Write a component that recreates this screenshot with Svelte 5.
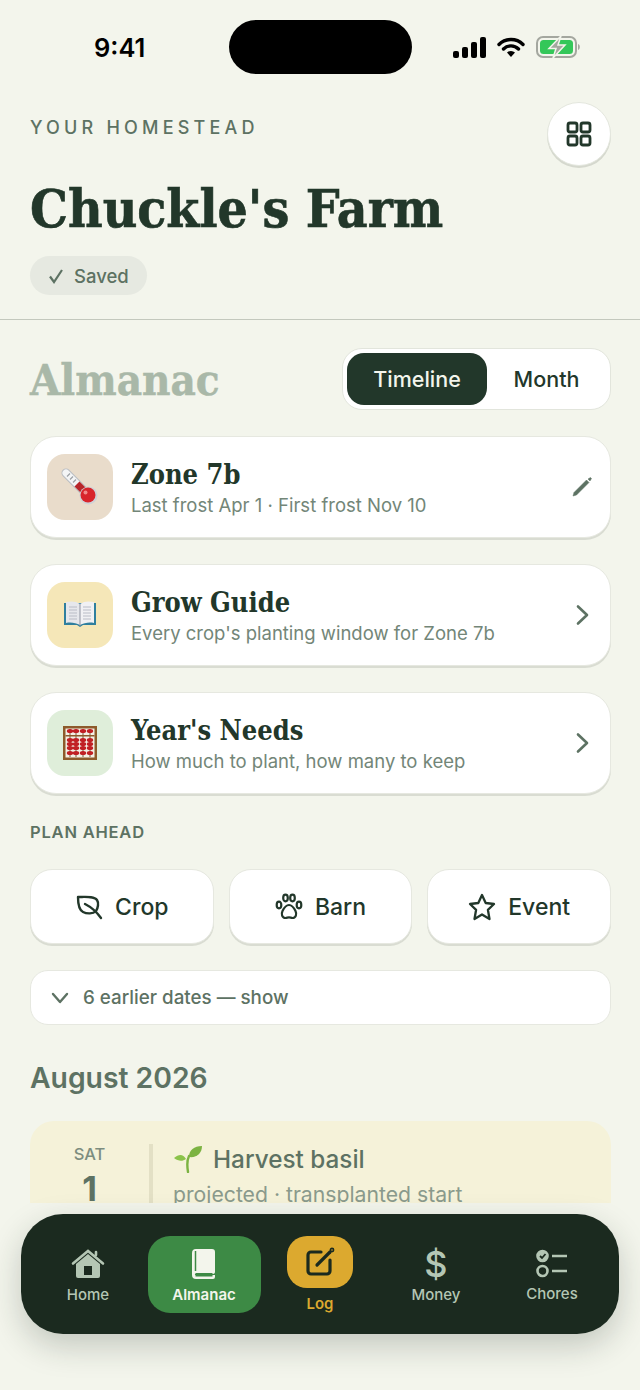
<script>
  let view = $state('Timeline');
  const views = ['Timeline', 'Month'];
</script>

<div class="screen">
  <div class="scroll">
    <div class="status">
      <span class="time">9:41</span>
      <span class="island"></span>
      <span class="status-icons">
        <svg width="33" height="21" viewBox="0 0 33 21"><rect x="0" y="14" width="6" height="7" rx="2"/><rect x="9" y="10" width="6" height="11" rx="2"/><rect x="18" y="5" width="6" height="16" rx="2"/><rect x="27" y="0" width="6" height="21" rx="2"/></svg>
        <svg width="28" height="21" viewBox="0 0 28 21"><path d="M2 7.500a17 17 0 0 1 24 0M6.500 12a10.500 10.500 0 0 1 15 0" fill="none" stroke="#000" stroke-width="3.400" stroke-linecap="round"/><path d="M10 15.600a5.600 5.600 0 0 1 8 0L14 20z"/></svg>
        <svg width="46" height="22" viewBox="0 0 46 22"><rect x="1" y="1" width="39" height="20" rx="6" fill="none" stroke="#a4a79f" stroke-width="2"/><rect x="4" y="4" width="33" height="14" rx="3.500" fill="#34c759"/><path d="M42 8c2.400.5 2.400 5.500 0 6z" fill="#a4a79f"/><path d="M25 0 13 12.500h7L17 22l12-13h-7z" fill="#a4a79f" stroke="#f3f5ec" stroke-width="1.500"/></svg>
      </span>
    </div>

    <header class="head">
      <div class="head-top">
        <div class="eyebrow">YOUR HOMESTEAD</div>
        <button class="round" aria-label="Menu">
          <svg width="26" height="26" viewBox="0 0 26 26" fill="none" stroke="#22372a" stroke-width="2.800"><rect x="2" y="2" width="9" height="9" rx="2"/><rect x="15" y="2" width="9" height="9" rx="2"/><rect x="2" y="15" width="9" height="9" rx="2"/><rect x="15" y="15" width="9" height="9" rx="2"/></svg>
        </button>
      </div>
      <h1>Chuckle's Farm</h1>
      <div class="saved">
        <svg width="16" height="16" viewBox="0 0 16 16" fill="none" stroke="#5d7263" stroke-width="2.200"><path d="M2 8.500 6 14 14 2"/></svg>
        Saved
      </div>
    </header>

    <main>
      <div class="almanac-row">
        <h2>Almanac</h2>
        <div class="segment">
          {#each views as v}
            <button class:on={view === v} onclick={() => (view = v)}>{v}</button>
          {/each}
        </div>
      </div>

      <div class="card">
        <div class="tile tan">
          <svg width="40" height="40" viewBox="0 0 40 40"><path d="M6 6 27 27" stroke="#b9bdc2" stroke-width="9" stroke-linecap="round"/><path d="M6 6 27 27" stroke="#f4f5f6" stroke-width="7" stroke-linecap="round"/><path d="M17 17 27 27" stroke="#b8262a" stroke-width="7"/><circle cx="28.500" cy="28.500" r="9" fill="#cfd2d6"/><circle cx="28" cy="28" r="7.500" fill="#d8252c"/><circle cx="25.500" cy="25.500" r="2" fill="#f08a8a"/><path d="M7 9.500 10 6.500M10 12.500 13 9.500M13 15.500 16 12.500" stroke="#9da1a6" stroke-width="1.200"/></svg>
        </div>
        <div class="card-text">
          <div class="card-title">Zone 7b</div>
          <div class="card-sub">Last frost Apr 1 · First frost Nov 10</div>
        </div>
        <svg class="card-end" width="22" height="22" viewBox="0 0 22 22" fill="#5d7263" stroke="#5d7263" stroke-width=".5" stroke-linejoin="round"><path d="M2 20l1-3.500L15.500 4l2.500 2.500L5.500 19z"/><path d="M17 3l2.500-1.500 1 1L19 5z"/></svg>
      </div>

      <div class="card">
        <div class="tile yellow">
          <svg width="34" height="30" viewBox="0 0 34 30"><path d="M1 3h32v22H20l-3 2-3-2H1z" fill="#2f7f9e"/><path d="M3 2c5-1 10-1 14 2v21c-4-2-9-3-14-2z" fill="#e6e7ec"/><path d="M31 2c-5-1-10-1-14 2v21c4-2 9-3 14-2z" fill="#f1f1f4"/><path d="M6 7h8M6 10h8M6 13h8M6 16h8M6 19h8M20 7h8M20 10h8M20 13h8M20 16h8M20 19h8" stroke="#b9bcc6" stroke-width="1"/><path d="M17 4v22" stroke="#8f93a0" stroke-width="1"/></svg>
        </div>
        <div class="card-text">
          <div class="card-title">Grow Guide</div>
          <div class="card-sub">Every crop's planting window for Zone 7b</div>
        </div>
        <svg class="card-end" width="22" height="22" viewBox="0 0 22 22" fill="none" stroke="#5d7263" stroke-width="2.600" stroke-linecap="round" stroke-linejoin="round"><path d="M7 2.500 16 11l-9 8.500"/></svg>
      </div>

      <div class="card">
        <div class="tile green">
          <svg width="34" height="34" viewBox="0 0 34 34"><rect width="34" height="34" fill="#8d5a2b"/><rect x="2.500" y="2.500" width="29" height="29" fill="#f4efe6"/>
            {#each [7, 13, 20, 27] as x}
              <path d="M{x} 3v28" stroke="#7a5a3a" stroke-width="1"/>
              {#each [5, 14, 18, 22, 27] as y}<ellipse cx={x} cy={y} rx="3.200" ry="2.100" fill="#c11f24"/>{/each}
            {/each}
            <rect x="2.500" y="9" width="29" height="1.500" fill="#8d5a2b"/></svg>
        </div>
        <div class="card-text">
          <div class="card-title">Year's Needs</div>
          <div class="card-sub">How much to plant, how many to keep</div>
        </div>
        <svg class="card-end" width="22" height="22" viewBox="0 0 22 22" fill="none" stroke="#5d7263" stroke-width="2.600" stroke-linecap="round" stroke-linejoin="round"><path d="M7 2.500 16 11l-9 8.500"/></svg>
      </div>

      <div class="section-label">PLAN AHEAD</div>

      <div class="plan">
        <button class="plan-btn">
          <svg width="28" height="26" viewBox="0 0 28 26" fill="none" stroke="#22372a" stroke-width="2.400" stroke-linecap="round" stroke-linejoin="round"><path d="M3 3c8 0 16-1 19 3 2 3 1 8-1 11-3 3-9 3-13 1C4 16 3 9 3 3z"/><path d="M10 10c4 2 11 7 16 14"/></svg>
          Crop
        </button>
        <button class="plan-btn">
          <svg width="28" height="28" viewBox="0 0 28 28" fill="none" stroke="#22372a" stroke-width="2.200" stroke-linecap="round" stroke-linejoin="round"><ellipse cx="10.500" cy="5" rx="2.300" ry="3.300"/><ellipse cx="17.500" cy="5" rx="2.300" ry="3.300"/><ellipse cx="4" cy="12" rx="2.300" ry="3.300"/><ellipse cx="24" cy="12" rx="2.300" ry="3.300"/><path d="M14 12c-3 0-5 3-6.500 6-1.500 3-.5 7 3 7 1.500 0 2-.7 3.500-.7s2 .7 3.500.7c3.500 0 4.500-4 3-7-1.500-3-3.500-6-6.500-6z"/></svg>
          Barn
        </button>
        <button class="plan-btn">
          <svg width="28" height="28" viewBox="0 0 28 28" fill="none" stroke="#22372a" stroke-width="2.300" stroke-linejoin="round"><path d="M14 2l3.700 8 8.300 1-6.100 5.800L21.500 26 14 21.500 6.500 26l1.600-9.200L2 11l8.300-1z"/></svg>
          Event
        </button>
      </div>

      <button class="earlier">
        <svg width="18" height="12" viewBox="0 0 18 12" fill="none" stroke="#5d7263" stroke-width="2.400" stroke-linecap="round" stroke-linejoin="round"><path d="M2 2l7 8 7-8"/></svg>
        6 earlier dates — show
      </button>

      <h3>August 2026</h3>

      <div class="event">
        <div class="date">
          <div class="dow">SAT</div>
          <div class="day">1</div>
        </div>
        <div class="event-body">
          <div class="event-title">
            <svg width="30" height="28" viewBox="0 0 30 28"><path d="M15 27c-1-6-1-12 1-16" fill="none" stroke="#7cb342" stroke-width="2.400" stroke-linecap="round"/><path d="M16 12C16 5 21 1 29 1c0 7-5 12-13 11z" fill="#7cb342"/><path d="M13 14C10 9 6 9 1 13c4 3 8 4 12 1z" fill="#8bc34a"/></svg>
            Harvest basil
          </div>
          <div class="event-sub">projected · transplanted start</div>
        </div>
      </div>
    </main>
  </div>

  <nav class="tabbar">
    <button class="tab">
      <svg width="34" height="30" viewBox="0 0 34 30"><path d="M5 15 17 5l12 10v12a2 2 0 0 1-2 2H7a2 2 0 0 1-2-2z" fill="#b4c6b4"/><path d="M2 14.500 17 2l15 12.500M25 6V3" fill="none" stroke="#b4c6b4" stroke-width="2.600" stroke-linecap="round"/><rect x="13" y="17" width="8" height="9" fill="#1b2a1f"/></svg>
      <span>Home</span>
    </button>
    <button class="tab active">
      <svg width="24" height="30" viewBox="0 0 24 30"><path d="M4 0h16a3 3 0 0 1 3 3v20c0 1-1 2-2 2H3a3 3 0 0 0 0 1v0H23v2a2 2 0 0 1-2 2H4a4 4 0 0 1-4-4V4a4 4 0 0 1 4-4z" fill="#f3f5ec"/><path d="M3.500 2v20" stroke="#3d8a45" stroke-width="1.500"/><rect x="3.500" y="24" width="17" height="3.500" fill="#3d8a45"/></svg>
      <span>Almanac</span>
    </button>
    <button class="tab log">
      <span class="log-tile">
        <svg width="30" height="30" viewBox="0 0 30 30" fill="none" stroke="#1b2a1f" stroke-width="3.200" stroke-linecap="round"><path d="M16 5H6a3 3 0 0 0-3 3v16a3 3 0 0 0 3 3h16a3 3 0 0 0 3-3V13"/><path d="M12 18 25 5"/><circle cx="27" cy="3" r=".8"/></svg>
      </span>
      <span>Log</span>
    </button>
    <button class="tab">
      <span class="dollar">$</span>
      <span>Money</span>
    </button>
    <button class="tab chores">
      <svg width="32" height="29" viewBox="0 0 32 29" fill="none" stroke="#b4c6b4" stroke-width="2.600"><circle cx="6.500" cy="7" r="5" fill="#b4c6b4"/><path d="M4 7l2 2 3.500-4" stroke="#1b2a1f" stroke-width="1.800"/><circle cx="6.500" cy="22" r="5"/><path d="M16 7h15M16 22h15"/></svg>
      <span>Chores</span>
    </button>
  </nav>
</div>

<style>
  :global(body) {
    margin: 0;
    background: #f3f5ec;
  }
  .screen {
    position: relative;
    width: 640px;
    height: 1390px;
    overflow: hidden;
    background: #f3f5ec;
    font-family: Inter, "Liberation Sans", sans-serif;
    color: #22372a;
  }
  button {
    font-family: inherit;
    cursor: pointer;
  }
  .scroll {
    height: 1203px;
    overflow: hidden;
  }
  .status {
    display: flex;
    align-items: center;
    height: 54px;
    padding: 20px 0 0 94px;
  }
  .time {
    font-size: 25.500px;
    font-weight: 600;
    color: #000;
    width: 135px;
  }
  .island {
    width: 183px;
    height: 54px;
    border-radius: 27px;
    background: #000;
  }
  .status-icons {
    display: flex;
    align-items: center;
    gap: 11px;
    margin-left: 41px;
    flex: none;
  }
  .head {
    padding: 28px 29px 24px 30px;
    border-bottom: 1px solid #c3c8bd;
  }
  .head-top {
    display: flex;
    justify-content: space-between;
    align-items: flex-start;
    height: 64px;
  }
  .eyebrow {
    margin-top: 15px;
    font-size: 18px;
    font-weight: 500;
    letter-spacing: 4.200px;
    color: #5d7263;
  }
  .round {
    width: 64px;
    height: 64px;
    padding: 0;
    display: flex;
    align-items: center;
    justify-content: center;
    border-radius: 50%;
    border: 1px solid #e4e7de;
    background: #fff;
    box-shadow: 0 2px 0 #d5d8ce;
  }
  h1 {
    margin: 8px 0 0;
    font-family: "DejaVu Serif", "Liberation Serif", serif;
    font-stretch: condensed;
    font-size: 53px;
    line-height: 68px;
    font-weight: 700;
    -webkit-text-stroke: 0.6px #22372a;
    color: #22372a;
  }
  .saved {
    display: inline-flex;
    align-items: center;
    gap: 10px;
    margin-top: 14px;
    height: 39px;
    padding: 0 18px;
    border-radius: 20px;
    background: #e6e9e1;
    font-size: 18.500px;
    font-weight: 500;
    color: #5d7263;
  }
  main {
    padding: 28px 29px 0 30px;
  }
  .almanac-row {
    display: flex;
    justify-content: space-between;
    align-items: center;
    margin-bottom: 26px;
  }
  h2 {
    margin: 0;
    font-family: "DejaVu Serif", "Liberation Serif", serif;
    font-stretch: condensed;
    font-size: 43.500px;
    font-weight: 700;
    -webkit-text-stroke: 0.5px #a9b8a8;
    color: #a9b8a8;
  }
  .segment {
    display: flex;
    height: 62px;
    box-sizing: border-box;
    padding: 4px;
    background: #fff;
    border: 1px solid #e2e5dc;
    border-radius: 20px;
  }
  .segment button {
    width: 119px;
    border: 0;
    border-radius: 17px;
    background: transparent;
    font-size: 21.500px;
    font-weight: 500;
    color: #22372a;
  }
  .segment button.on {
    width: 140px;
    background: #22372a;
    color: #f3f5ec;
  }
  .card {
    display: flex;
    align-items: center;
    gap: 18px;
    box-sizing: border-box;
    height: 102px;
    margin-bottom: 26px;
    padding: 0 17px 0 16px;
    background: #fff;
    border: 1px solid #e6e8e0;
    border-radius: 26px;
    box-shadow: 0 2px 0 #d9dcd2;
  }
  .tile {
    flex: none;
    width: 66px;
    height: 66px;
    display: flex;
    align-items: center;
    justify-content: center;
    border-radius: 18px;
  }
  .tan { background: #e9dccb; }
  .yellow { background: #f5e7b8; }
  .green { background: #dfeeda; }
  .card-text {
    flex: 1;
  }
  .card-title {
    font-family: "DejaVu Serif", "Liberation Serif", serif;
    font-stretch: condensed;
    font-size: 27px;
    line-height: 34px;
    font-weight: 700;
    color: #22372a;
    padding-top: 1px;
  }
  .card-sub {
    margin-top: 1px;
    font-size: 18.500px;
    line-height: 24px;
    color: #738678;
  }
  .card-end {
    flex: none;
  }
  .section-label {
    margin-top: 2px;
    font-size: 16.500px;
    line-height: 24px;
    font-weight: 600;
    letter-spacing: 0.800px;
    color: #5d7263;
  }
  .plan {
    display: grid;
    grid-template-columns: repeat(3, 1fr);
    gap: 15px;
    margin-top: 25px;
  }
  .plan-btn {
    display: flex;
    align-items: center;
    justify-content: center;
    gap: 12px;
    height: 75px;
    padding: 0;
    background: #fff;
    border: 1px solid #e6e8e0;
    border-radius: 22px;
    box-shadow: 0 2px 0 #d9dcd2;
    font-size: 23px;
    font-weight: 500;
    color: #22372a;
  }
  .earlier {
    display: flex;
    align-items: center;
    gap: 14px;
    width: 100%;
    height: 55px;
    margin-top: 26px;
    padding: 0 20px;
    background: #fff;
    border: 1px solid #e6e8e0;
    border-radius: 18px;
    font-size: 18.800px;
    font-weight: 500;
    color: #5d7263;
  }
  h3 {
    margin: 35px 0 0;
    font-size: 28.300px;
    line-height: 36px;
    font-weight: 600;
    color: #5d7263;
  }
  .event {
    display: flex;
    height: 120px;
    margin-top: 25px;
    padding-top: 23px;
    box-sizing: border-box;
    background: #f5f2d9;
    border-radius: 24px;
  }
  .date {
    flex: none;
    width: 119px;
    text-align: center;
  }
  .dow {
    font-size: 16.500px;
    line-height: 20px;
    font-weight: 500;
    color: #7d8d7f;
  }
  .day {
    margin-top: 3px;
    font-size: 34px;
    line-height: 44px;
    font-weight: 700;
    color: #5d7263;
  }
  .event-body {
    flex: 1;
    padding-left: 20px;
    border-left: 4px solid #e3e0c5;
  }
  .event-title {
    display: flex;
    align-items: center;
    gap: 10px;
    font-size: 24.300px;
    line-height: 30px;
    font-weight: 500;
    color: #5d7263;
  }
  .event-sub {
    margin-top: 7px;
    font-size: 21.200px;
    line-height: 26px;
    color: #8a9a8c;
  }
  .tabbar {
    position: absolute;
    left: 21px;
    top: 1214px;
    width: 598px;
    height: 120px;
    box-sizing: border-box;
    padding: 22px 9px 0;
    display: grid;
    grid-template-columns: repeat(5, 116px);
    justify-items: center;
    align-items: start;
    background: #1b2a1f;
    border-radius: 42px;
    box-shadow: 0 12px 32px rgba(27, 42, 31, 0.22);
  }
  .tab {
    display: flex;
    flex-direction: column;
    align-items: center;
    height: 77px;
    padding: 13px 0 0;
    background: transparent;
    border: 0;
    font-size: 15px;
    font-weight: 500;
    color: #b4c6b4;
  }
  .tab span:last-child {
    margin-top: 6px;
  }
  .active {
    width: 113px;
    background: #3d8a45;
    border-radius: 22px;
    color: #f3f5ec;
    font-weight: 600;
  }
  .log {
    padding: 0;
    color: #dca92f;
    font-weight: 600;
  }
  .log-tile {
    width: 66px;
    height: 66px;
    display: flex;
    align-items: center;
    justify-content: center;
    border-radius: 20px;
    background: #dca92f;
  }
  .dollar {
    font-size: 36px;
    line-height: 30px;
    font-weight: 500;
  }
</style>
